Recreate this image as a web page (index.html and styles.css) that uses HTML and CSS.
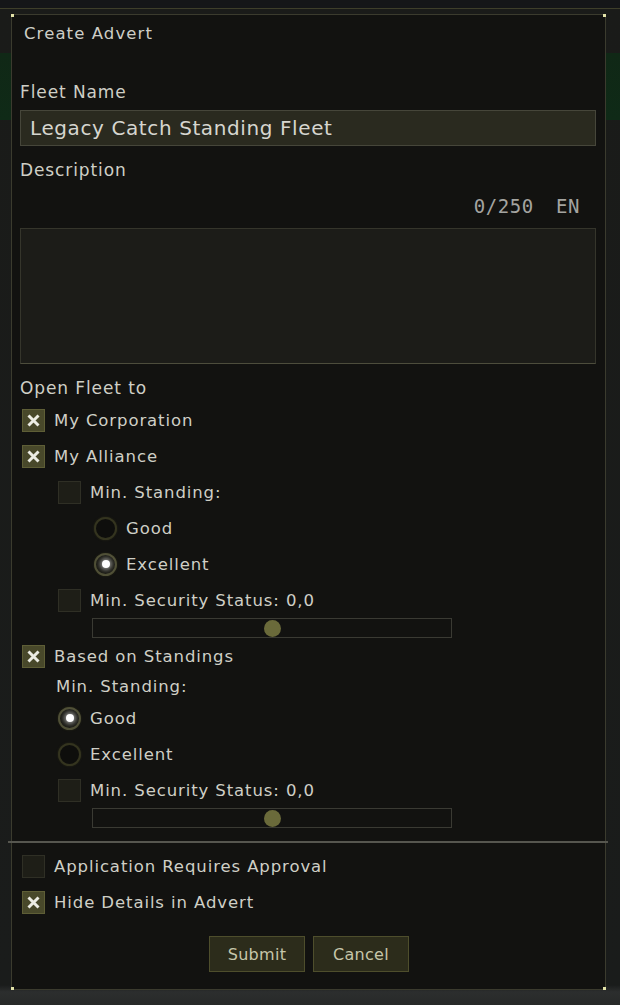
FILE: index.html
```html
<!DOCTYPE html>
<html>
<head>
<meta charset="utf-8">
<title>Create Advert</title>
<link rel="stylesheet" href="styles.css">
</head>
<body>
<div class="panel">
  <span class="corner tl"></span><span class="corner tr"></span><span class="corner bl"></span><span class="corner br"></span>
  <div class="title">Create Advert</div>
  <div class="label l-fleet">Fleet Name</div>
  <div class="input">Legacy Catch Standing Fleet</div>
  <div class="label l-desc">Description</div>
  <div class="counter"><span>0/250</span><span>EN</span></div>
  <div class="textarea"></div>
  <div class="label l-open">Open Fleet to</div>

  <div class="row"><span class="cb on"><svg viewBox="0 0 23 23"><path d="M6 6L17 17M17 6L6 17"/></svg></span><span>My Corporation</span></div>
  <div class="row"><span class="cb on"><svg viewBox="0 0 23 23"><path d="M6 6L17 17M17 6L6 17"/></svg></span><span>My Alliance</span></div>
  <div class="row ind1"><span class="cb"></span><span>Min. Standing:</span></div>
  <div class="row ind2"><span class="rb"></span><span>Good</span></div>
  <div class="row ind2"><span class="rb on"></span><span>Excellent</span></div>
  <div class="row ind1"><span class="cb"></span><span>Min. Security Status: 0,0</span></div>
  <div class="slider"><span class="knob"></span></div>

  <div class="row"><span class="cb on"><svg viewBox="0 0 23 23"><path d="M6 6L17 17M17 6L6 17"/></svg></span><span>Based on Standings</span></div>
  <div class="sub-label">Min. Standing:</div>
  <div class="row ind1"><span class="rb on"></span><span>Good</span></div>
  <div class="row ind1"><span class="rb"></span><span>Excellent</span></div>
  <div class="row ind1"><span class="cb"></span><span>Min. Security Status: 0,0</span></div>
  <div class="slider"><span class="knob"></span></div>

  <div class="divider"></div>

  <div class="row first-after"><span class="cb"></span><span>Application Requires Approval</span></div>
  <div class="row"><span class="cb on"><svg viewBox="0 0 23 23"><path d="M6 6L17 17M17 6L6 17"/></svg></span><span>Hide Details in Advert</span></div>

  <div class="buttons">
    <button class="btn">Submit</button>
    <button class="btn">Cancel</button>
  </div>
</div>
</body>
</html>
```
FILE: styles.css
```css
html, body {
  margin: 0;
  padding: 0;
}
body {
  width: 620px;
  height: 1005px;
  overflow: hidden;
  font-family: "DejaVu Sans", sans-serif;
  color: #cfcfc6;
  background:
    linear-gradient(to bottom, #151618 0, #151618 8px, #3e3e2a 8px, #3e3e2a 9px, transparent 9px),
    linear-gradient(to bottom, transparent 53px, #102816 53px, #0f2a17 120px, transparent 120px),
    linear-gradient(to bottom, #1a1b19 0, #1a1c1b 985px, #2c2e2e 992px, #272928 1005px);
}
.panel {
  position: relative;
  box-sizing: border-box;
  margin: 14px 0 0 11px;
  width: 595px;
  height: 976px;
  border: 1px solid #3b3b2e;
  background: #121210;
  padding: 0 8px;
}
.corner {
  position: absolute;
  width: 3px;
  height: 3px;
  background: #e2e2a8;
}
.corner.tl { left: -1px; top: -1px; }
.corner.tr { right: -1px; top: -1px; }
.corner.bl { left: -1px; bottom: -1px; }
.corner.br { right: -1px; bottom: -1px; }

.title {
  padding: 9px 0 0 4px;
  line-height: 20px;
  font-size: 16.5px;
  letter-spacing: 1.1px;
  color: #cdcdc6;
}
.label {
  font-size: 17px;
  line-height: 20px;
  letter-spacing: 0.9px;
}
.l-fleet { margin-top: 38px; }
.l-desc { margin-top: 14px; }
.l-open { margin-top: 14px; }

.input {
  box-sizing: border-box;
  margin-top: 8px;
  margin-right: 1px;
  height: 36px;
  border: 1px solid #46463a;
  background: #2a2a1f;
  padding-left: 9px;
  line-height: 34px;
  font-size: 20px;
  letter-spacing: 0.6px;
  color: #d6d6cf;
}
.counter {
  margin-top: 16px;
  display: flex;
  justify-content: flex-end;
  gap: 22px;
  padding-right: 17px;
  line-height: 20px;
  font-family: "DejaVu Sans Mono", monospace;
  font-size: 19px;
  letter-spacing: 0.6px;
  color: #a4a4a0;
}
.textarea {
  box-sizing: border-box;
  margin-top: 12px;
  margin-right: 1px;
  height: 136px;
  border: 1px solid #35352b;
  border-bottom-color: #4d4d3c;
  background: #1c1c18;
}
.row {
  display: flex;
  align-items: center;
  height: 36px;
  gap: 9px;
  padding-left: 2px;
  font-size: 16.5px;
  letter-spacing: 0.9px;
}
.l-open + .row { margin-top: 4px; }
.ind1 { padding-left: 38px; }
.ind2 { padding-left: 74px; }

.cb {
  box-sizing: border-box;
  flex: none;
  width: 23px;
  height: 23px;
  border: 1px solid #2f2f25;
  background: #1e1e17;
  display: flex;
}
.cb.on {
  border-color: #5e5e36;
  background: #48482a;
}
.cb svg {
  width: 21px;
  height: 21px;
}
.cb path {
  stroke: #ecece4;
  stroke-width: 3.2;
  fill: none;
}
.rb {
  box-sizing: border-box;
  flex: none;
  width: 23px;
  height: 23px;
  border-radius: 50%;
  border: 2px solid #34341f;
  background: #0e0e0c;
  box-shadow: 0 0 2px #2a2a18;
  display: flex;
  align-items: center;
  justify-content: center;
}
.rb.on {
  border-color: #4f4f36;
  background: #1a1a14;
}
.rb.on::after {
  content: "";
  width: 8px;
  height: 8px;
  border-radius: 50%;
  background: #ffffff;
  box-shadow: 0 0 4px 2px rgba(255, 255, 255, 0.5);
}
.slider {
  box-sizing: border-box;
  display: flex;
  align-items: center;
  margin-left: 72px;
  width: 360px;
  height: 20px;
  border: 1px solid #3a3a33;
  padding-left: 171px;
}
.knob {
  width: 17px;
  height: 17px;
  border-radius: 50%;
  background: #6a6a3a;
}
.sub-label {
  padding-left: 36px;
  height: 26px;
  line-height: 26px;
  font-size: 16.5px;
  letter-spacing: 0.9px;
}
.divider {
  margin: 13px -11px 0 -12px;
  height: 2px;
  background: #56564f;
}
.first-after { margin-top: 5px; }
.buttons {
  margin-top: 16px;
  display: flex;
  justify-content: center;
  gap: 8px;
  padding-left: 1px;
}
.btn {
  box-sizing: border-box;
  width: 96px;
  height: 36px;
  border: 1px solid #4e4e2c;
  background: #2c2c1b;
  color: #c6c6aa;
  font-family: "DejaVu Sans", sans-serif;
  font-size: 16px;
  letter-spacing: 0.3px;
  padding: 0;
}
```
